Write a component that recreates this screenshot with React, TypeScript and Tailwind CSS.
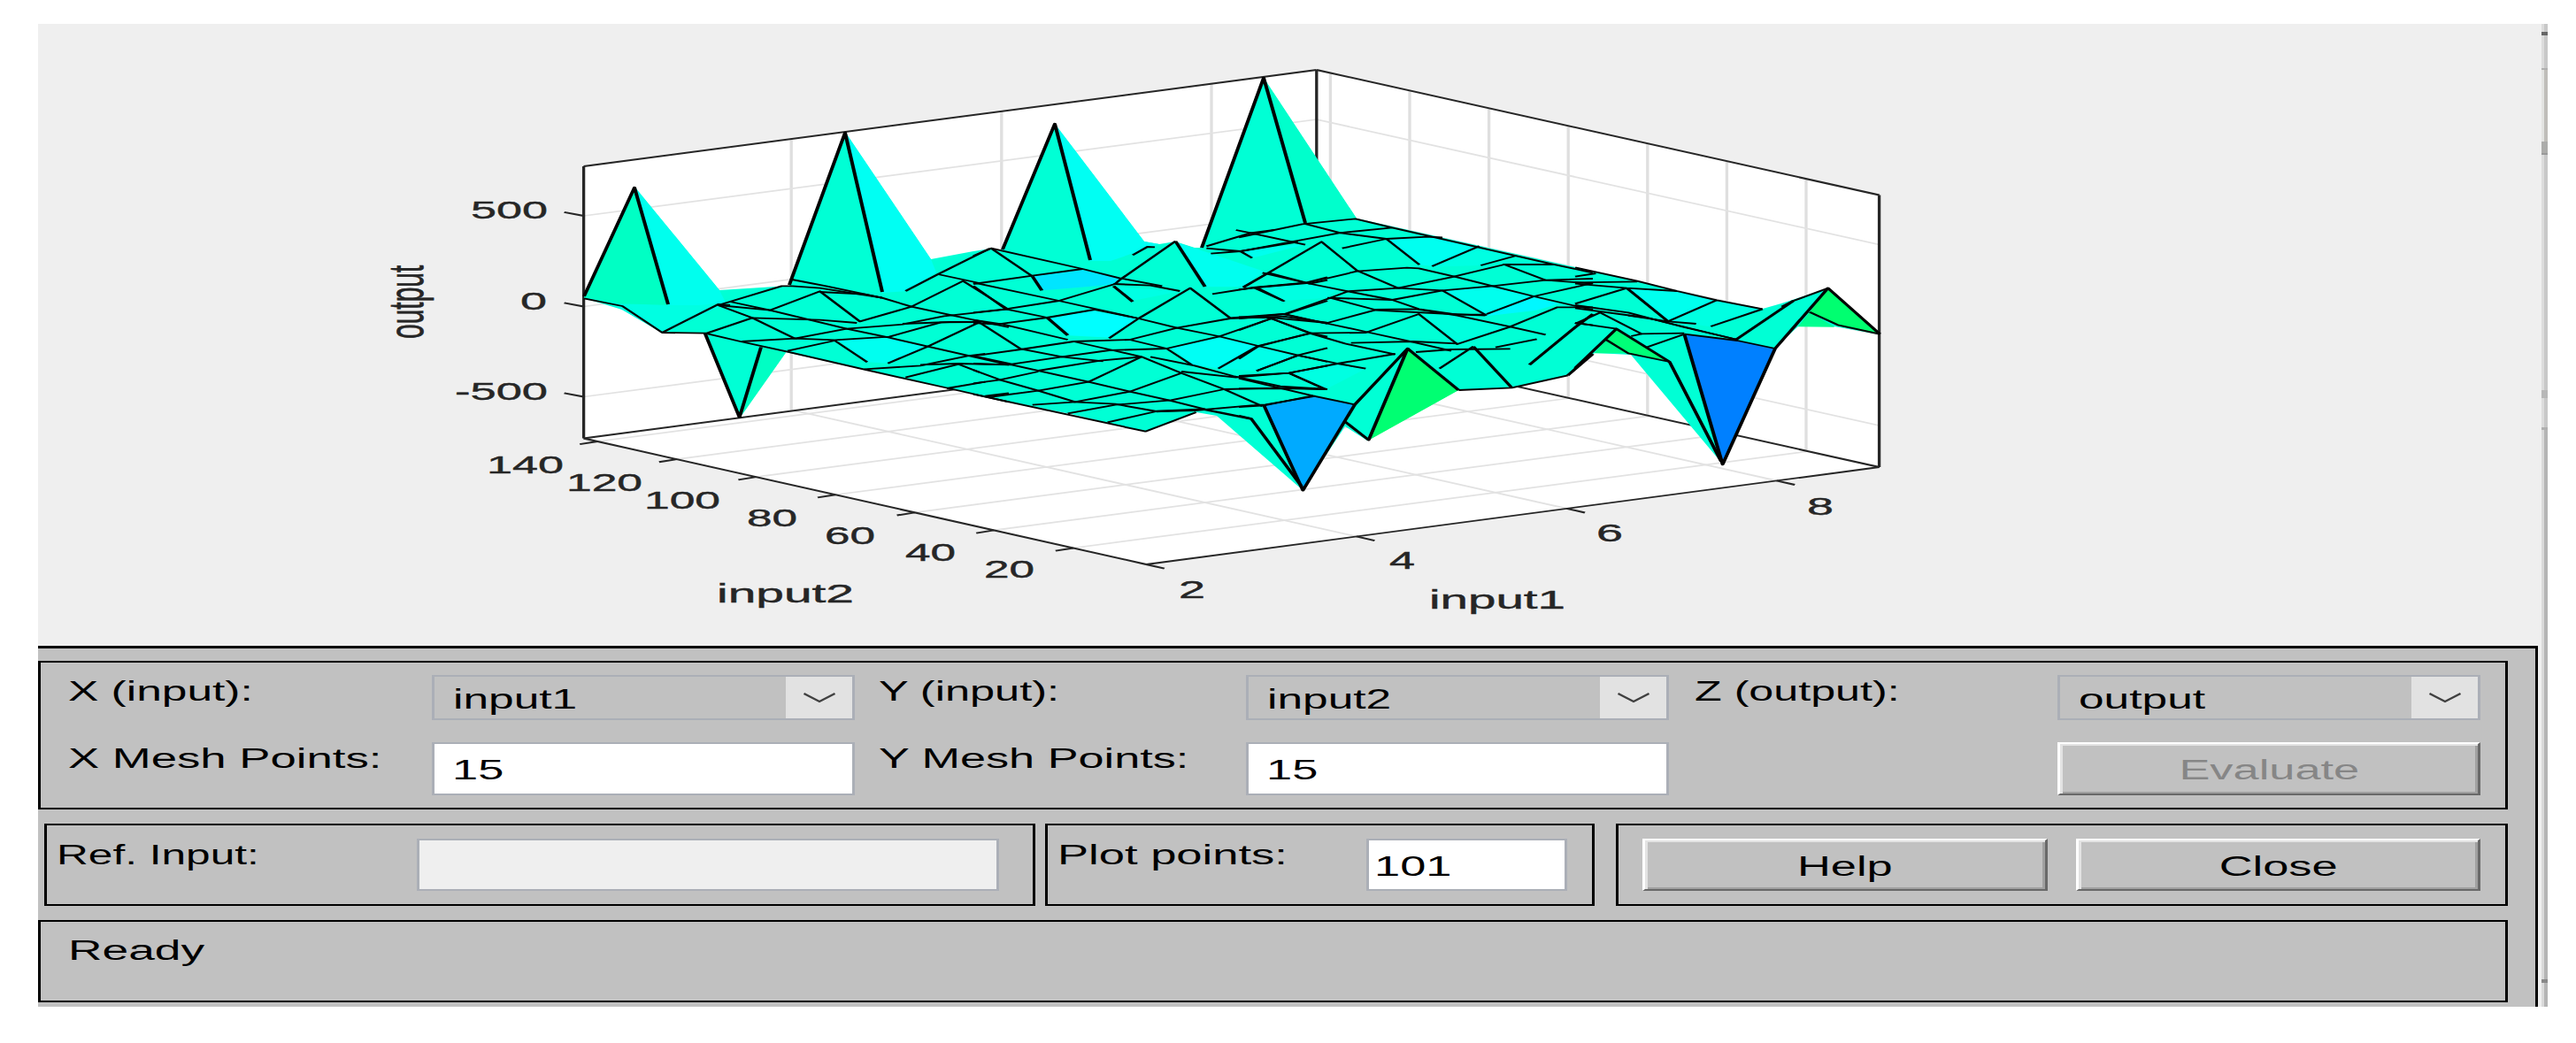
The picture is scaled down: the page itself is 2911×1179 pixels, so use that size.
import type { ReactNode } from "react";
import clsx from "clsx";

type Pt = [number, number];
type Tile = { ox: number; oy: number; patches: [string, string][]; lines: string[]; bold: string[] };

// horizontal stretch of the whole figure, strokes included
const K = 1.75;

const parse = (s: string): Pt[] => s.trim().split(/\s+/).map((p) => p.split(",").map(Number) as Pt);
const plain = (s: string) => parse(s).map(([x, y]) => `${(x / K).toFixed(2)},${y}`).join(" ");
const local = (s: string, t: Tile) =>
  parse(s).map(([x, y]) => `${((t.ox + x / 3) / K).toFixed(2)},${(t.oy + y / 3).toFixed(2)}`).join(" ");

const SILHOUETTE =
  "660,337 717,211 813,328 892,323 955,149 1052,293 1100,284 1120,281 1132,283 1192,140 1293,273 1310,276 1328,273 1350,280 1358,280 1428,88 1533,247 1780,302 1940,339 1992,349 2013,343 2066,326 2124,378 2073,369 2032,369 2006,393 1947,525 1843,401 1802,399 1780,416 1772,424 1708,438 1648,441 1545,498 1520,482 1472,554 1375,470 1352,466 1294,488 1210,468 1140,454 1077,440 977,418 888,398 836,472 797,377 748,376 703,350";

const PEAK_FACES: [string, string][] = [
  ["#00ffe2", "690,344 820,344 748,376 703,350"],
  ["#00ffc4", "660,336 717,211 755,345 700,343"],
  ["#00ffee", "717,211 813,328 820,342 790,345 755,345"],
  ["#00fff3", "955,149 1052,293 1058,308 1025,329 997,331"],
  ["#00fff3", "1192,140 1293,273 1310,276 1255,295 1232,295"],
  ["#00ffcc", "1428,88 1533,247 1475,252"],
];

const PEAK_LINES = [
  "660,335 717,212 755,344",
  "892,322 955,150 997,330",
  "1133,282 1192,140 1232,294",
  "1358,280 1428,88 1475,252",
];

// mesh detail, four tiles in 1/3 px units
const TILES: Tile[] = [
  {
    ox: 640, oy: 260,
    patches: [
      ["#00fff0", "925,375 1095,365 1225,395 1095,452 1020,448"],
      ["#00ffc4", "660,397 745,415 595,628"],
    ],
    lines: [
      "60,232 190,258 325,348 470,350 590,378 750,413 1010,473 1310,540 1500,583",
      "325,348 515,252 555,255", "525,252 730,190 765,190",
      "765,168 880,190 1070,230 1170,260 1310,290 1500,330",
      "765,190 860,197 1070,230", "860,210 1010,218 1070,230",
      "515,255 690,272 860,208 995,310 1170,260 1345,173 1500,270",
      "555,243 690,272 950,335 1095,365 1225,395 1500,457",
      "515,255 630,298 775,368",
      "470,352 630,298 860,305 985,315",
      "775,368 950,335 1140,320 1280,292 1500,268",
      "595,378 775,368 910,373 1095,362 1270,313 1400,312",
      "750,410 910,375 1020,448",
      "1090,452 1225,395 1400,313",
      "1140,318 1300,312 1400,312",
      "1150,207 1260,150 1435,63", "1260,150 1400,180",
      "1010,472 1200,460 1360,427 1420,420",
      "1200,457 1330,453 1500,457",
      "1150,500 1330,455 1400,482",
      "1290,537 1420,515", "1420,563 1500,553",
    ],
    bold: ["470,350 587,635 660,397"],
  },
  {
    ox: 1100, oy: 260,
    patches: [
      ["#00e5ff", "203,155 370,135 490,160 495,175 455,187 235,205"],
      ["#00fff0", "690,42 820,85 985,140 915,193 790,193"],
      ["#00ffe4", "475,192 700,208 540,240"],
      ["#00ffff", "260,300 400,272 550,300 465,365 325,358"],
      ["#00fff5", "670,400 830,365 965,392 835,470 740,455"],
      ["#00ffe8", "965,392 1095,425 960,478 835,470"],
    ],
    lines: [
      "0,88 60,62 200,157",
      "60,62 370,132 495,163 640,190",
      "0,183 200,155 370,132",
      "0,178 290,240 560,300 690,332 830,360 965,393 1100,425 1200,447",
      "0,280 110,268 290,240 480,183 495,170 685,38",
      "540,85 590,57 615,58", "475,183 600,188 700,207",
      "0,190 110,268 250,297",
      "80,320 250,297 410,270 560,300",
      "0,305 100,320 320,372", "0,315 80,320",
      "460,367 560,300 735,197 870,298",
      "20,313 160,403 300,430 440,445",
      "0,427 160,405 340,378 530,372 690,332 870,300 1060,293",
      "870,298 1050,285 1200,318", "1060,285 1200,240",
      "1050,293 1200,315",
      "0,427 130,455 300,430 460,408 655,402 830,362 1010,300 1145,350 1200,362",
      "0,453 130,457", "130,457 390,515 530,548 665,578 785,608",
      "220,477 430,443 570,430", "0,520 90,508 220,480",
      "0,475 90,508 220,545 345,583",
      "50,567 220,545 390,515 570,430 705,485 850,540 980,598",
      "340,378 460,405 570,430", "600,430 750,460 880,495 1040,530 1200,540",
      "705,480 890,500 1070,485 1200,460",
      "530,372 655,402 740,457",
      "830,470 965,393 1145,350", "960,478 1100,425 1200,400",
      "1070,485 1185,537",
      "200,593 345,583 530,548 705,485",
      "320,622 480,593 670,577 850,540 1060,535 1200,540",
      "340,583 480,590 620,615 750,612 940,595 990,592 1160,563",
      "455,652 620,615", "0,557 583,683 755,618",
      "810,217 950,195 1130,178 1200,160", "950,195 1050,240",
      "915,193 1000,145", "1000,145 1140,182 1200,170",
      "790,55 940,10 1020,0", "790,62 905,72 945,95",
      "805,80 905,72 1100,40", "890,0 940,10 1125,50",
    ],
    bold: ["685,38 785,192", "250,297 320,357", "200,157 232,205", "475,190 540,243", "620,615 780,608 940,640"],
  },
  {
    ox: 1400, oy: 240,
    patches: [
      ["#00fff0", "505,92 655,85 815,117 655,183 612,178"],
      ["#00ffe2", "815,117 940,147 820,180 655,185"],
      ["#00ffee", "690,265 860,250 995,285 840,348"],
      ["#00f8ff", "840,348 995,287 1085,310 1010,332 840,352"],
      ["#00ffe2", "65,258 235,240 330,262 300,290 155,300"],
      ["#00ffee", "10,130 240,105 45,155"],
      ["#00ffe2", "170,548 335,515 430,530 295,600"],
      ["#00ffde", "610,345 720,347 920,388 740,447"],
      ["#00aaff", "85,655 250,623 393,652 217,943"],
      ["#00ff72", "572,462 745,603 445,770"],
    ],
    lines: [
      "0,85 215,40 395,22 520,52 810,118 1060,175 1200,205",
      "0,133 340,70 520,52",
      "220,38 345,70 500,90 640,83 690,85",
      "350,122 500,90 612,178", "655,183 815,115", "820,180 940,147",
      "895,177 1070,177",
      "15,255 280,100 400,197 540,257",
      "80,205 230,240 370,268 520,297 610,328 740,347 835,347",
      "0,262 60,255 230,240 400,200 570,188 610,190 740,220 860,250 1000,285 1130,315 1200,330",
      "60,255 155,302",
      "540,257 720,220 900,177 1040,230 1200,242",
      "370,268 540,257 690,265 840,350",
      "690,265 860,250 1040,230 1200,225",
      "840,345 1000,285 1200,240",
      "0,360 155,345 310,290 370,268", "300,290 520,297 690,265",
      "310,290 460,330 600,328 740,350 920,388 1040,415",
      "155,345 290,375 430,405 590,440 720,470",
      "0,355 120,358 300,375 460,332", "460,332 720,345 835,350",
      "0,400 110,360 240,410 360,445 530,482",
      "240,410 430,408 610,345 740,447 920,388 1080,322 1200,322",
      "65,455 240,410", "0,497 65,455",
      "200,485 335,513 430,530",
      "60,538 200,485", "380,443 590,438 740,445",
      "0,555 170,545 335,513 530,480",
      "600,474 720,465 920,463", "870,458 1010,430",
      "170,545 295,600", "0,563 250,622",
      "0,598 150,597 295,600",
      "0,660 85,655 250,622 393,652",
      "680,530 795,455", "745,603 925,595 1115,553",
      "1140,375 1200,383",
    ],
    bold: [
      "85,655 217,943 393,652 572,462 440,772 360,710",
      "0,690 42,700 213,930", "572,462 745,603", "795,455 925,595",
      "985,517 1140,390 1200,345", "1115,553 1200,480",
    ],
  },
  {
    ox: 1780, oy: 280,
    patches: [
      ["#00ffee", "180,140 345,147 480,178 320,250"],
      ["#00ffe2", "480,178 635,208 460,268 320,250"],
      ["#00ff90", "795,218 880,269 755,268"],
      ["#00ff70", "857,137 1033,293 890,265 795,218"],
      ["#00ff90", "105,312 180,358 65,358"],
      ["#00ff78", "140,275 320,387 180,360 105,312"],
      ["#0080ff", "370,293 550,315 678,342 500,735"],
    ],
    lines: [
      "0,67 210,113 345,147 480,178 635,208",
      "0,98 70,87", "0,118 210,115", "0,122 175,137 345,147",
      "0,190 175,137", "315,250 480,178",
      "0,195 180,220 370,270 550,312", "0,205 240,237 550,312",
      "180,230 315,250 410,258", "460,267 635,208",
      "0,258 85,220 225,292 370,290", "15,257 140,275",
      "190,300 225,292", "245,337 370,293",
      "370,293 550,315 678,342",
      "105,312 180,358 320,387", "795,218 890,262 1033,293",
      "700,200 740,180 857,137",
    ],
    bold: [
      "175,137 315,250", "0,408 140,275 320,387 495,725",
      "370,293 500,735 678,342 857,137 1033,293",
      "545,312 740,180",
    ],
  },
];

// box corners
const L: Pt = [659.6, 495.5];
const B: Pt = [1487.8, 386.5];
const R: Pt = [2123.6, 528];
const F: Pt = [1295.3, 638];
const H = 307.5;

const Y_STEPS = [0, 1, 2, 3, 4, 5, 6].map((i) => 15.6 + i * 89.6);
const X_STEPS = [237.6, 475.2, 712.4];
const Z_STEPS = [56, 158.5, 260.5];
const SY = (F[1] - L[1]) / (F[0] - L[0]);
const SX = (R[1] - F[1]) / (R[0] - F[0]);

// text, x, baseline, width
const TICKS: [string, number, number, number][] = [
  ["500", 532, 247, 87], ["0", 588, 350, 30], ["-500", 514, 451.5, 105],
  ["140", 550, 535, 87], ["120", 640, 555, 86], ["100", 728, 575, 86],
  ["80", 844, 594.5, 57], ["60", 932, 614.5, 57], ["40", 1023, 634, 57], ["20", 1112, 653, 57],
  ["2", 1332, 676, 30], ["4", 1570, 643, 29], ["6", 1804, 612, 30], ["8", 2042, 582, 30],
];

function Seg({ a, b, grid }: { a: Pt; b: Pt; grid?: boolean }) {
  const upright = a[0] === b[0];
  return (
    <line x1={a[0] / K} y1={a[1]} x2={b[0] / K} y2={b[1]}
      stroke={grid ? (upright ? "#dfdfdf" : "#e2e2e2") : "#262626"}
      strokeWidth={grid && !upright ? 1.7 : 1.9} />
  );
}

function SurfacePlot() {
  const up = (p: Pt, d = H): Pt => [p[0], p[1] - d];
  return (
    <svg width={2829} height={703} viewBox="43 27 2829 703" className="block">
      <g transform={`scale(${K} 1)`} fill="none">
        <polygon fill="#fff" points={[up(L), up(B), up(R), R, F, L].map(([x, y]) => `${x / K},${y}`).join(" ")} />

        {Y_STEPS.map((d) => (
          <g key={d}>
            <Seg grid a={[L[0] + d, L[1] + d * SY]} b={[B[0] + d, B[1] + d * SY]} />
            <Seg grid a={[B[0] + d, B[1] + d * SY]} b={[B[0] + d, B[1] + d * SY - H]} />
            <Seg a={[L[0] + d, L[1] + d * SY]} b={[L[0] + d - 20, L[1] + d * SY + 3.2]} />
          </g>
        ))}
        {X_STEPS.map((d) => (
          <g key={d}>
            <Seg grid a={[L[0] + d, L[1] + d * SX]} b={[F[0] + d, F[1] + d * SX]} />
            <Seg grid a={[L[0] + d - 3, L[1] + d * SX]} b={[L[0] + d - 3, L[1] + d * SX - H]} />
            <Seg a={[F[0] + d, F[1] + d * SX]} b={[F[0] + d + 20.5, F[1] + d * SX + 4.6]} />
          </g>
        ))}
        {Z_STEPS.map((d) => (
          <g key={d}>
            <Seg grid a={up(L, H - d)} b={up(B, H - d)} />
            <Seg grid a={up(B, H - d)} b={up(R, H - d)} />
            <Seg a={up(L, H - d)} b={[L[0] - 22, L[1] - H + d - 4.2]} />
          </g>
        ))}
        <Seg a={F} b={[F[0] + 20.5, F[1] + 4.6]} />
        <Seg a={L} b={up(L)} />
        <Seg a={up(L)} b={up(B)} />
        <Seg a={up(B)} b={up(R)} />
        <Seg a={up(R)} b={R} />
        <Seg a={R} b={F} />
        <Seg a={F} b={L} />
        <Seg a={L} b={B} />
        <Seg a={B} b={R} />
        <Seg a={B} b={up(B)} />

        <polygon points={plain(SILHOUETTE)} fill="#00ffd5" />
        {PEAK_FACES.map(([fill, pts]) => <polygon key={pts} points={plain(pts)} fill={fill} />)}
        {TILES.map((t) => t.patches.map(([fill, pts]) => (
          <polygon key={t.ox + pts} points={local(pts, t)} fill={fill} />
        )))}
        <g stroke="#000" strokeWidth={1.85} strokeLinejoin="round">
          {TILES.map((t) => t.lines.map((pts) => <polyline key={t.ox + pts} points={local(pts, t)} />))}
        </g>
        <g stroke="#000" strokeWidth={2.3} strokeLinejoin="round">
          {TILES.map((t) => t.bold.map((pts) => <polyline key={t.ox + pts} points={local(pts, t)} />))}
          {PEAK_LINES.map((pts) => <polyline key={pts} points={plain(pts)} />)}
        </g>
      </g>

      <g fill="#262626" stroke="#262626" strokeWidth={0.4} fontFamily="'Liberation Sans', Arial, sans-serif" fontSize={27.5}>
        {TICKS.map(([s, x, y, w]) => (
          <text key={s} x={x} y={y} textLength={w} lengthAdjust="spacingAndGlyphs">{s}</text>
        ))}
        <text x={810} y={681} fontSize={29.5} textLength={155} lengthAdjust="spacingAndGlyphs">input2</text>
        <text x={1615} y={688} fontSize={29.5} textLength={154} lengthAdjust="spacingAndGlyphs">input1</text>
        <text transform="translate(478 383) scale(1.88 1) rotate(-90)" fontSize={30}>output</text>
      </g>
    </svg>
  );
}

function T({ children, className = "origin-left scale-x-[1.72]" }: { children: ReactNode; className?: string }) {
  return <span className={clsx("block whitespace-pre text-[31px] leading-none", className)}>{children}</span>;
}

function Label({ children, className, stretch }: { children: ReactNode; className?: string; stretch: string }) {
  return (
    <div className={clsx("shrink-0 pt-[3px]", className)}>
      <T className={clsx("origin-left", stretch)}>{children}</T>
    </div>
  );
}

function Popup({ value }: { value: string }) {
  return (
    <div className="flex h-[51px] w-[478px] shrink-0 justify-between border-x-[3px] border-y-2 border-[#abafb7]">
      <div className="pt-[10px] pl-[21px]"><T className="origin-left scale-x-[1.66]">{value}</T></div>
      <div className="flex w-[75px] items-center justify-center bg-[#e2e2e2]">
        <svg width="38" height="12" viewBox="0 0 38 12" fill="none">
          <path d="M1.5 1 L19 10 L36.5 1" stroke="#404040" strokeWidth="2.4" />
        </svg>
      </div>
    </div>
  );
}

function Edit({ value, className }: { value?: string; className?: string }) {
  return (
    <div className={clsx("shrink-0 border-x-[3px] border-y-2 border-[#abafb7] pt-[14px]", className)}>
      {value && <T className="origin-left scale-x-[1.69]">{value}</T>}
    </div>
  );
}

function Button({ children, disabled, className }: { children: string; disabled?: boolean; className?: string }) {
  return (
    <button
      disabled={disabled}
      className={clsx(
        "flex shrink-0 justify-center border-t-2 border-r-[3px] border-b-2 border-l-[3px] border-t-white border-r-[#696969] border-b-[#696969] border-l-white pt-[14px] shadow-[inset_3px_2px_0_#e3e3e3,inset_-3px_-2px_0_#a0a0a0]",
        disabled ? "text-[#868686]" : "text-black",
        className,
      )}
    >
      <T className="origin-center scale-x-[1.69]">{children}</T>
    </button>
  );
}

// sliver of the neighbouring window, with a few marks on it
function EdgeStrip() {
  return (
    <div className="flex h-[1111px] w-[7px] flex-col">
      <div className="h-[9px] border-l-[3px] border-[#dcdcdc] bg-[#c8c8c8]" />
      <div className="h-[4px] bg-[#666]" />
      <div className="h-[37px] border-l-[3px] border-[#dcdcdc] bg-[#c8c8c8]" />
      <div className="h-[2px] bg-[#b0b0b0]" />
      <div className="h-[81px] border-l-[3px] border-[#e3e3e1] bg-[#bfbdb9]" />
      <div className="h-[15px] border-b-2 border-[#999] bg-[#acacaa]" />
      <div className="h-[266px] border-l-[3px] border-[#dcdcdc] bg-[#c8c8c8]" />
      <div className="h-[9px] bg-[#b8b8b8]" />
      <div className="h-[33px] border-l-[3px] border-[#dcdcdc] bg-[#c8c8c8]" />
      <div className="h-[3px] bg-[#b0b0b0]" />
      <div className="h-[621px] border-l-[3px] border-[#d9d9d9] bg-[#b4b4b4]" />
      <div className="h-[4px] bg-[#888]" />
      <div className="grow border-l-[3px] border-[#d9d9d9] bg-[#b4b4b4]" />
    </div>
  );
}

export default function App() {
  return (
    <div className="h-[1179px] w-[2911px] overflow-hidden bg-white pt-[27px] pl-[43px] font-['Liberation_Sans',Arial,sans-serif] text-black">
      <div className="flex h-[1111px] w-[2836px] bg-[#efefef]">
        <div className="w-[2829px]">
          <SurfacePlot />

          <div className="h-[408px] w-[2825px] border-t-[3px] border-r-[3px] border-black bg-[#c1c1c1] pt-[14px]">
            <div className="flex h-[168px] w-[2791px] flex-col gap-[25px] border-x-[3px] border-y-2 border-black pt-[14px] pl-[31px]">
              <div className="flex">
                <Label className="w-[411px]" stretch="scale-x-[1.66]">X (input):</Label>
                <Popup value="input1" />
                <Label className="ml-[27px] w-[415px]" stretch="scale-x-[1.63]">Y (input):</Label>
                <Popup value="input2" />
                <Label className="ml-[29px] w-[410px]" stretch="scale-x-[1.62]">Z (output):</Label>
                <Popup value="output" />
              </div>
              <div className="flex">
                <Label className="w-[411px]" stretch="scale-x-[1.7]">X Mesh Points:</Label>
                <Edit value="15" className="h-[60px] w-[478px] bg-white pl-[20px]" />
                <Label className="ml-[27px] w-[415px]" stretch="scale-x-[1.685]">Y Mesh Points:</Label>
                <Edit value="15" className="h-[60px] w-[478px] bg-white pl-[20px]" />
                <Button disabled className="ml-[439px] h-[60px] w-[478px]">Evaluate</Button>
              </div>
            </div>

            <div className="mt-[16px] flex h-[93px] pl-[7px]">
              <div className="flex w-[1120px] border-x-[3px] border-y-2 border-black pt-[15px] pl-[11px]">
                <Label className="w-[407px]" stretch="scale-x-[1.6]">Ref. Input:</Label>
                <Edit className="h-[59px] w-[658px] bg-[#efefef]" />
              </div>
              <div className="ml-[11px] flex w-[621px] border-x-[3px] border-y-2 border-black pt-[15px] pl-[11px]">
                <Label className="w-[349px]" stretch="scale-x-[1.695]">Plot points:</Label>
                <Edit value="101" className="h-[59px] w-[227px] bg-white pl-[6px]" />
              </div>
              <div className="ml-[24px] flex w-[1008px] gap-[32px] border-x-[3px] border-y-2 border-black pt-[15px] pl-[27px]">
                <Button className="h-[59px] w-[458px]">Help</Button>
                <Button className="h-[59px] w-[457px]">Close</Button>
              </div>
            </div>

            <div className="mt-[16px] h-[93px] w-[2791px] border-x-[3px] border-y-2 border-black pt-[17px] pl-[31px]">
              <T>Ready</T>
            </div>
          </div>
        </div>
        <EdgeStrip />
      </div>
    </div>
  );
}
